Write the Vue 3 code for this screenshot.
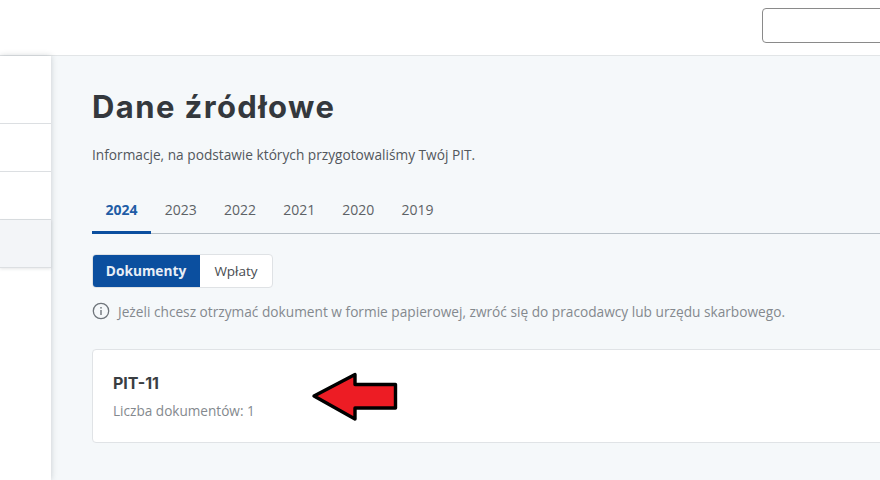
<template>
  <div class="page">
    <header class="top">
      <div class="search"></div>
    </header>
    <div class="body">
      <aside class="side">
        <div class="row first"></div>
        <div class="row"></div>
        <div class="row"></div>
        <div class="row active"></div>
      </aside>
      <main class="main">
        <h1 class="title">Dane źródłowe</h1>
        <p class="lead">Informacje, na podstawie których przygotowaliśmy Twój PIT.</p>
        <nav class="tabs">
          <span v-for="(y, i) in years" :key="y" class="tab" :class="{ on: i === 0 }">{{ y }}</span>
        </nav>
        <div class="toggle">
          <span class="seg sel">Dokumenty</span>
          <span class="seg">Wpłaty</span>
        </div>
        <div class="note">
          <svg class="info" width="18" height="18" viewBox="0 0 18 18" fill="none">
            <circle cx="9" cy="9" r="7.7" stroke="#6f757b" stroke-width="1.3" />
            <rect x="8.3" y="8" width="1.4" height="5" fill="#6f757b" />
            <rect x="8.3" y="5" width="1.4" height="1.6" fill="#6f757b" />
          </svg>
          <span>Jeżeli chcesz otrzymać dokument w formie papierowej, zwróć się do pracodawcy lub urzędu skarbowego.</span>
        </div>
        <section class="card">
          <h2 class="card-title">PIT-11</h2>
          <p class="card-sub">Liczba dokumentów: 1</p>
          <svg class="arrow" width="88" height="54" viewBox="0 0 88 54">
            <path d="M3 26 L44 4.5 L44 14.5 L84.5 14.5 L84.5 38 L44 38 L44 49 Z" fill="#ed1c24" stroke="#000" stroke-width="3.4" stroke-linejoin="round" />
          </svg>
        </section>
      </main>
    </div>
  </div>
</template>

<script setup>
const years = [2024, 2023, 2022, 2021, 2020, 2019]
</script>

<style>
html, body { margin: 0; overflow: hidden; background: #fff; }
</style>

<style scoped>
.page {
  width: 880px;
  height: 480px;
  overflow: hidden;
  display: flex;
  flex-direction: column;
  font-family: "Open Sans", "Noto Sans", sans-serif;
}
.top {
  height: 56px;
  flex: none;
  box-sizing: border-box;
  padding: 8px 0 0 762px;
  background: #fff;
  border-bottom: 1px solid #e2e5e7;
  overflow: hidden;
}
.search {
  width: 160px;
  height: 35px;
  box-sizing: border-box;
  border: 1px solid #8a8a8a;
  border-radius: 4px;
}
.body { flex: 1; display: flex; min-height: 0; }
.side {
  width: 51px;
  flex: none;
  background: #fff;
  box-shadow: 0 0 6px rgba(40, 50, 60, 0.22);
  position: relative;
}
.row {
  height: 48px;
  box-sizing: border-box;
  border-bottom: 1px solid #dcdfe2;
}
.row.first { height: 68px; }
.row.active { background: #f3f5f8; box-shadow: 0 1px 3px rgba(40, 50, 60, 0.12); }
.main {
  flex: 1;
  min-width: 0;
  background: #f5f8fa;
  padding: 32px 0 0 41px;
}
.title {
  margin: 0;
  font-family: Inter, "Noto Sans", sans-serif;
  font-size: 31px;
  line-height: 38px;
  font-weight: 700;
  letter-spacing: 1.4px;
  color: #34383d;
}
.lead {
  margin: 20px 0 0;
  font-size: 13.7px;
  line-height: 18px;
  color: #52575c;
}
.tabs {
  margin: 25px 0 0;
  width: 830px;
  display: flex;
  border-bottom: 1px solid #b9c1c8;
  height: 45px;
  box-sizing: border-box;
}
.tab {
  box-sizing: border-box;
  width: 59.2px;
  height: 45px;
  padding-top: 12px;
  text-align: center;
  font-size: 14px;
  line-height: 18px;
  color: #5d6266;
}
.tab.on {
  font-weight: 700;
  color: #1f5da6;
  border-bottom: 3px solid #0b4f9f;
}
.toggle {
  margin-top: 20px;
  display: inline-flex;
  height: 34px;
  box-sizing: border-box;
  border-radius: 4px;
  background: #fff;
  border: 1px solid #dfe2e5;
  overflow: hidden;
  vertical-align: top;
}
.seg {
  width: 72px;
  text-align: center;
  font-size: 13.5px;
  line-height: 32px;
  font-weight: 500;
  color: #484c50;
}
.seg.sel {
  width: 108px;
  margin: -1px 0 -1px -1px;
  line-height: 34px;
  background: #0b4f9f;
  color: #e8eef6;
  font-weight: 700;
  font-size: 13.7px;
}
.note {
  margin-top: 13px;
  display: flex;
  align-items: center;
  gap: 8px;
  height: 20px;
  font-size: 13.7px;
  color: #84898e;
  white-space: nowrap;
}
.card {
  position: relative;
  margin-top: 28px;
  width: 830px;
  height: 94px;
  box-sizing: border-box;
  padding: 23px 20px;
  background: #fff;
  border: 1px solid #e0e3e6;
  border-radius: 4px;
}
.card-title {
  margin: 0;
  font-family: Inter, "Noto Sans", sans-serif;
  font-size: 16px;
  line-height: 20px;
  font-weight: 700;
  color: #3a3e42;
}
.card-sub {
  margin: 9px 0 0;
  font-size: 13.6px;
  line-height: 18px;
  color: #84898e;
}
.arrow {
  position: absolute;
  left: 218px;
  top: 20px;
}
</style>
